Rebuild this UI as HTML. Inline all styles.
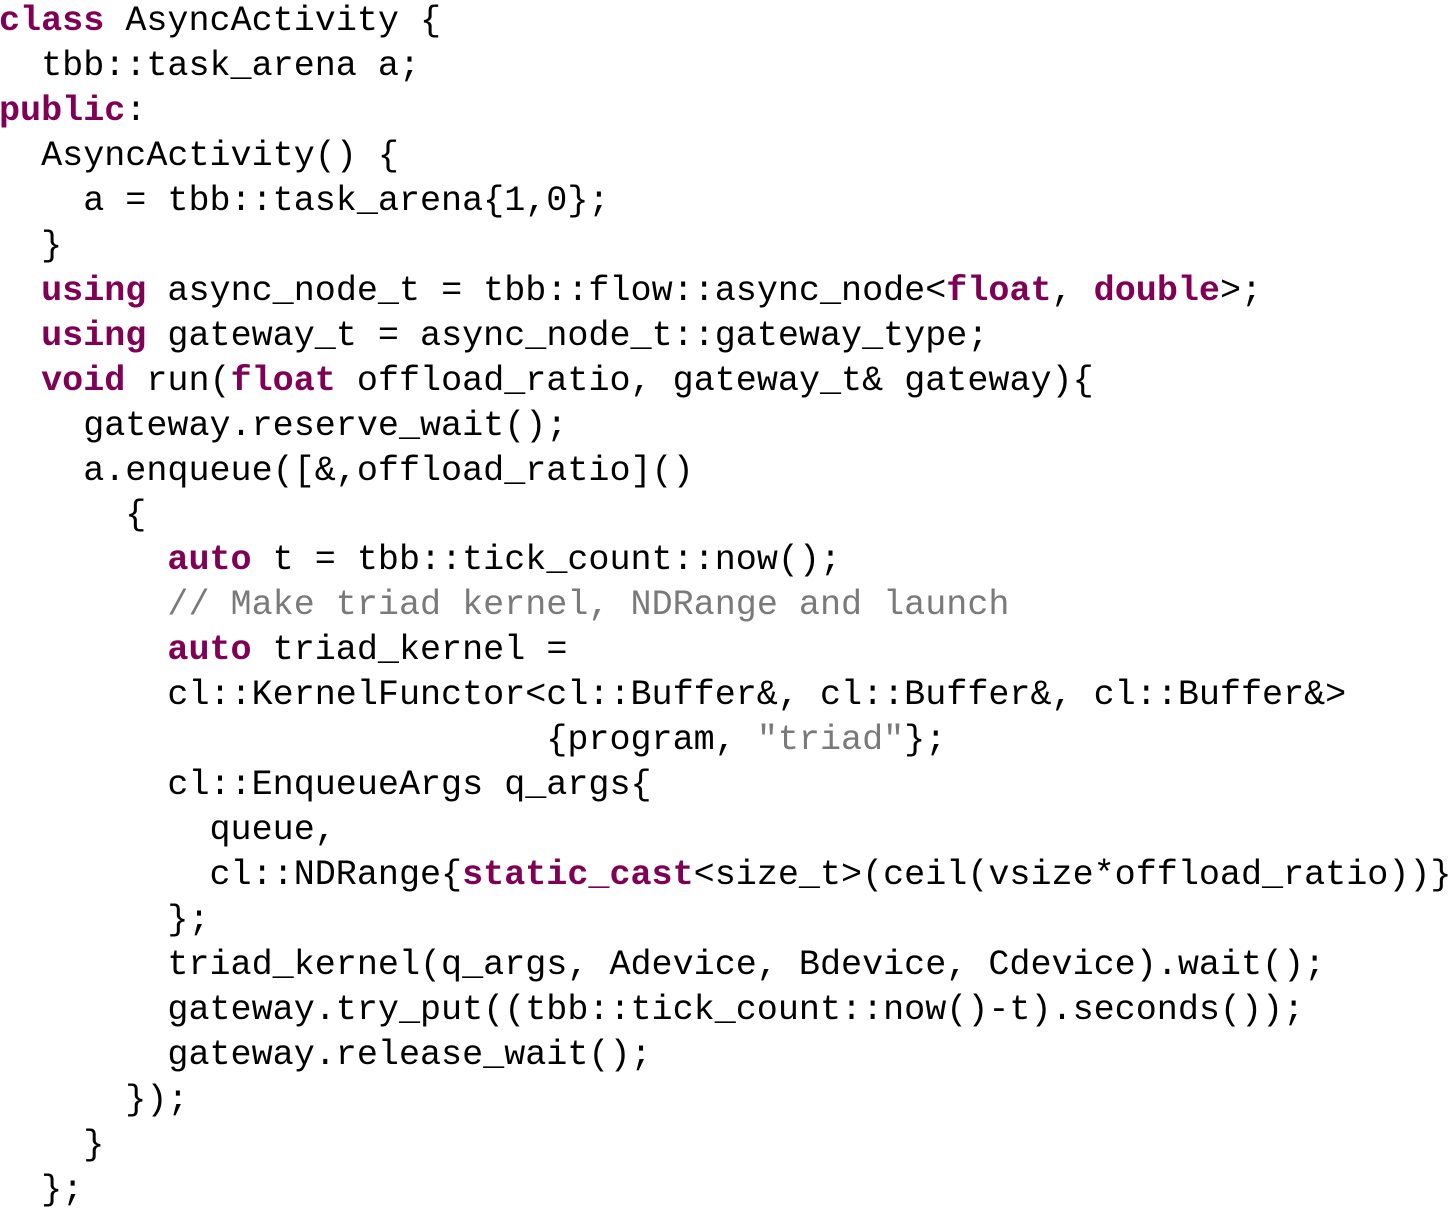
<!DOCTYPE html>
<html><head><meta charset="utf-8"><style>
html,body{margin:0;padding:0;background:#fff;width:1451px;height:1206px;overflow:hidden}
pre{margin:0;position:absolute;left:-1px;top:-1px;font-family:"Liberation Mono",monospace;font-size:35.1px;line-height:44.95px;color:#000;letter-spacing:0}
b{color:#7f0055;font-weight:bold}
i{color:#7a7a7a;font-style:normal}
</style></head><body><pre><b>class</b> AsyncActivity {
  tbb::task_arena a;
<b>public</b>:
  AsyncActivity() {
    a = tbb::task_arena{1,0};
  }
  <b>using</b> async_node_t = tbb::flow::async_node&lt;<b>float</b>, <b>double</b>&gt;;
  <b>using</b> gateway_t = async_node_t::gateway_type;
  <b>void</b> run(<b>float</b> offload_ratio, gateway_t&amp; gateway){
    gateway.reserve_wait();
    a.enqueue([&amp;,offload_ratio]()
      {
        <b>auto</b> t = tbb::tick_count::now();
        <i>// Make triad kernel, NDRange and launch</i>
        <b>auto</b> triad_kernel =
        cl::KernelFunctor&lt;cl::Buffer&amp;, cl::Buffer&amp;, cl::Buffer&amp;&gt;
                          {program, <i>"triad"</i>};
        cl::EnqueueArgs q_args{
          queue,
          cl::NDRange{<b>static_cast</b>&lt;size_t&gt;(ceil(vsize*offload_ratio))}
        };
        triad_kernel(q_args, Adevice, Bdevice, Cdevice).wait();
        gateway.try_put((tbb::tick_count::now()-t).seconds());
        gateway.release_wait();
      });
    }
  };</pre></body></html>
